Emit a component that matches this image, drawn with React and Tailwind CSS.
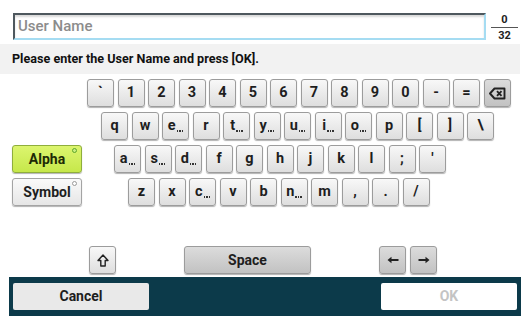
import React from 'react'

const font = "font-['Roboto','Liberation_Sans',sans-serif]"

const row1 = ['`', '1', '2', '3', '4', '5', '6', '7', '8', '9', '0', '-', '=']
const row2 = ['q', 'w', 'e.', 'r', 't.', 'y.', 'u.', 'i.', 'o.', 'p', '[', ']', '\\']
const row3 = ['a.', 's.', 'd.', 'f', 'g', 'h', 'j', 'k', 'l', ';', "'"]
const row4 = ['z', 'x', 'c.', 'v', 'b', 'n.', 'm', ',', '.', '/']

function Dots() {
  return (
    <span className="inline-flex gap-[1px] ml-[1px] align-[-2px]">
      <span className="w-[1.5px] h-[1.5px] bg-[#333]" />
      <span className="w-[1.5px] h-[1.5px] bg-[#333]" />
      <span className="w-[1.5px] h-[1.5px] bg-[#333]" />
    </span>
  )
}

function Key({ label, className = 'w-[27px]', dark, children }) {
  // a trailing dot marks keys that hold accented variants
  const accent = label && label.length === 2 && label.endsWith('.')
  const text = accent ? label[0] : label
  return (
    <div
      className={`${className} h-[28px] shrink-0 flex items-center justify-center rounded-[3px] border border-[#9c9c9c] shadow-[0_1px_1px_rgba(0,0,0,0.3)] text-[14.5px] font-bold text-[#1e1e1e] ${
        dark ? 'bg-linear-to-b from-[#dcdcdc] to-[#c2c2c2]' : 'bg-linear-to-b from-[#f8f8f8] to-[#dedede]'
      }`}
    >
      {children || (
        <span className="leading-none">
          {text}
          {accent && <Dots />}
        </span>
      )}
    </div>
  )
}

function ModeButton({ label, active }) {
  return (
    <div
      className={`relative w-[70px] h-[28px] ml-[12px] shrink-0 flex items-center justify-center rounded-[3px] border text-[14px] font-bold shadow-[0_1px_1px_rgba(0,0,0,0.3)] ${
        active
          ? 'bg-linear-to-b from-[#dcf56e] to-[#c6e84a] border-[#8fae3c] text-[#1d2a05]'
          : 'bg-linear-to-b from-[#fafafa] to-[#e6e6e6] border-[#a4a4a4] text-[#1e1e1e]'
      }`}
    >
      {label}
      <span
        className={`absolute top-[2px] right-[4px] w-[5px] h-[5px] rounded-full border ${
          active ? 'border-[#5fa62a] bg-[#c8ee80]' : 'border-[#9a9a9a] bg-white'
        }`}
      />
    </div>
  )
}

function Row({ left, offset, keys, tail }) {
  return (
    <div className="flex items-center h-[28px]">
      {left || <div className="w-[70px] ml-[12px] shrink-0" />}
      <div className={`flex gap-[3.5px] ${offset}`}>
        {keys.map((k) => (
          <Key key={k} label={k} />
        ))}
        {tail}
      </div>
    </div>
  )
}

export default function App() {
  return (
    <div className={`w-[526px] h-[320px] bg-white overflow-hidden flex flex-col ${font}`}>
      {/* input row */}
      <div className="flex items-start pt-[13px] pl-[13px]">
        <div className="w-[473px] h-[27px] bg-white border-2 border-t-[#4e585e] border-l-[#4e585e] border-r-[#a5dcf2] border-b-[#a5dcf2] shadow-[inset_0_2px_2px_rgba(0,0,0,0.15)] flex items-center pl-[3px]">
          <span className="text-[15px] font-medium text-[#8c8c8c]">User Name</span>
        </div>
        <div className="ml-[5px] w-[27px] flex flex-col items-center text-[11px] font-bold text-[#222] leading-none">
          <span className="pt-[1px] pb-[2px]">0</span>
          <div className="w-full h-px bg-[#555]" />
          <span className="pt-[2px]">32</span>
        </div>
      </div>

      {/* message band */}
      <div className="mt-[3px] mr-[6px] h-[30px] bg-[#f2f2f2] flex items-center pl-[12px]">
        <span className="text-[12.6px] font-bold text-[#111]">
          Please enter the User Name and press [OK].
        </span>
      </div>

      {/* keyboard */}
      <div className="mt-[5px] flex flex-col gap-[5px]">
        <Row
          offset="ml-[5px]"
          keys={row1}
          tail={
            <Key dark>
              <svg width="17" height="13" viewBox="0 0 17 13" fill="none" stroke="#222" strokeWidth="1.9" strokeLinejoin="round">
                <path d="M5.5 1.5h10v10h-10L1 6.5z" />
                <path d="M8 4.2l4.5 4.6M12.5 4.2L8 8.8" />
              </svg>
            </Key>
          }
        />
        <Row offset="ml-[19px]" keys={row2} />
        <Row offset="ml-[32px]" keys={row3} left={<ModeButton label="Alpha" active />} />
        <Row offset="ml-[46px]" keys={row4} left={<ModeButton label="Symbol" />} />
      </div>

      {/* bottom keys */}
      <div className="mt-[40px] flex items-center">
        <Key className="w-[27px] ml-[89px]">
          <svg width="12" height="13" viewBox="0 0 12 13" fill="none" stroke="#222" strokeWidth="1.4" strokeLinejoin="round">
            <path d="M6 1L1 6.5h2.8V12h4.4V6.5H11z" />
          </svg>
        </Key>
        <Key className="w-[127px] ml-[68px]" dark>
          <span className="text-[14px]">Space</span>
        </Key>
        <Key className="w-[27px] ml-[68px]" dark>
          <svg width="12" height="8" viewBox="0 0 12 8" fill="#222">
            <path d="M0.5 4L4.5 0.8V3.1H11.5V4.9H4.5V7.2z" />
          </svg>
        </Key>
        <Key className="w-[27px] ml-[4px]" dark>
          <svg width="12" height="8" viewBox="0 0 12 8" fill="#222">
            <path d="M11.5 4L7.5 0.8V3.1H0.5V4.9H7.5V7.2z" />
          </svg>
        </Key>
      </div>

      {/* action bar */}
      <div className="mt-[3px] mx-[9px] w-[512px] h-[39px] bg-[#0c3a4a] flex items-center justify-between px-[4px]">
        <div className="w-[136px] h-[27px] rounded-[2px] bg-[#e9e9e9] flex items-center justify-center text-[14px] font-bold text-[#1e1e1e]">
          Cancel
        </div>
        <div className="w-[136px] h-[27px] rounded-[2px] bg-white flex items-center justify-center text-[14px] font-bold text-[#c4c4c4]">
          OK
        </div>
      </div>
    </div>
  )
}
